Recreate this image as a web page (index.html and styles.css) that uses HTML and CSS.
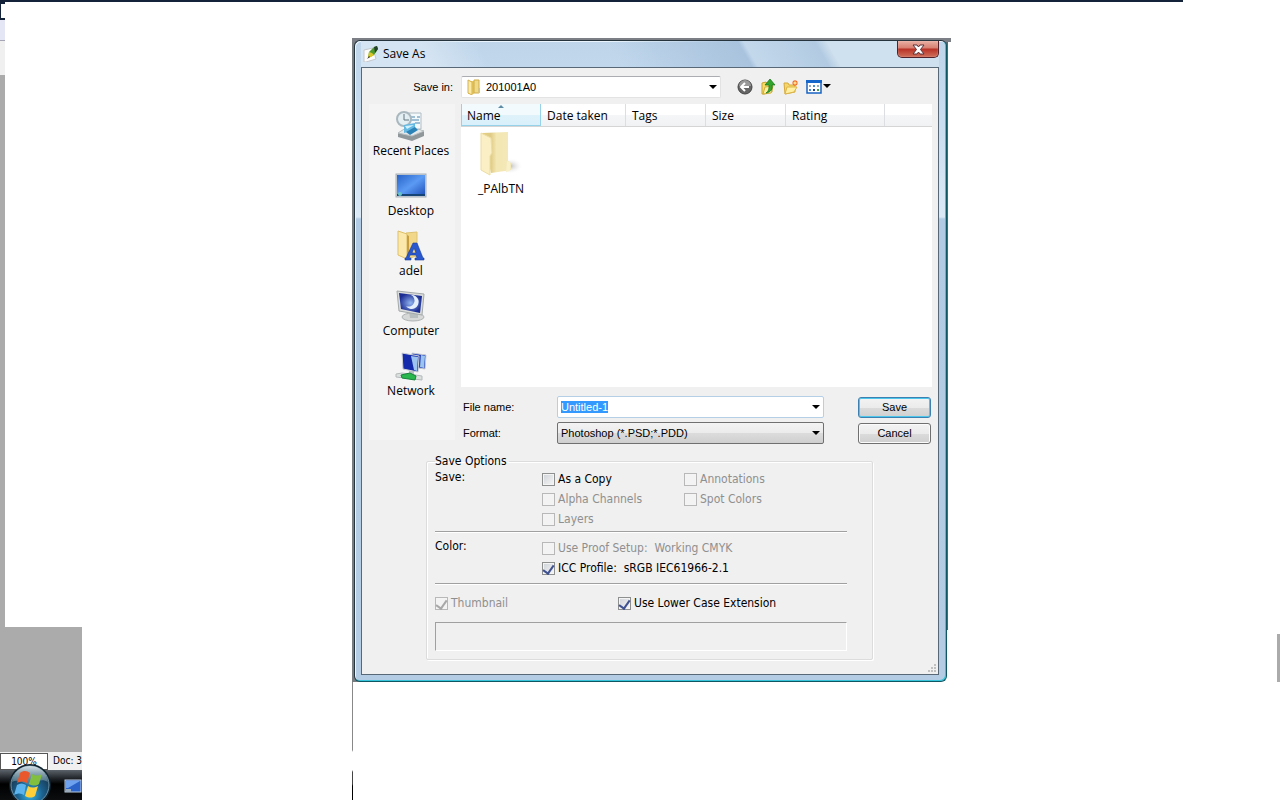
FILE: index.html
```
<!DOCTYPE html>
<html lang="en">
<head>
    <meta charset="UTF-8">
    <meta name="viewport" content="width=device-width, initial-scale=1.0">
    <title>Save As</title>
    <link rel="stylesheet" href="styles.css">
</head>
<body>

    <div class="desktop">
        <!-- pieces of the editor window behind the dialog -->
        <div class="top-strip"></div>
        <div class="left-strip">
            <div class="strip-tab"></div>
            <div class="strip-bar"></div>
            <div class="strip-light"></div>
            <div class="strip-canvas"></div>
        </div>
        <div class="right-strip"></div>
        <div class="divider"></div>

        <div class="editor-corner">
            <div class="canvas"></div>
            <div class="status">
                <input class="zoom-box" type="text" value="100%" aria-label="Zoom">
                <span class="doc">Doc: 3</span>
            </div>
            <div class="taskbar">
                <button class="start" aria-label="Start">
                    <svg width="44" height="44" viewBox="0 0 44 44">
                        <defs>
                            <radialGradient id="orb" cx="50%" cy="75%" r="65%">
                                <stop offset="0" stop-color="#35b8e8"/>
                                <stop offset="0.5" stop-color="#1c618f"/>
                                <stop offset="1" stop-color="#173449"/>
                            </radialGradient>
                            <linearGradient id="shine" x1="0" y1="0" x2="0" y2="1">
                                <stop offset="0" stop-color="#d6e2e8"/>
                                <stop offset="1" stop-color="#5f8799" stop-opacity="0.5"/>
                            </linearGradient>
                        </defs>
                        <circle cx="22" cy="22" r="21" fill="#10212c"/>
                        <circle cx="22" cy="22" r="19" fill="url(#orb)" stroke="#6d93a6"/>
                        <path d="M4 19C5 9 13 3 22 3s17 6 18 16c-9-5-13 3-18 3S11 15 4 19z" fill="url(#shine)"/>
                        <path d="M12 10c4-3 7-2 10 0l-3 10c-3-2-6-2-10 0z" fill="#e8582c"/>
                        <path d="M24 11c3 2 6 2 10 0l-3 10c-3 2-6 2-10 0z" fill="#83bf3f"/>
                        <path d="M9 22c3-2 6-2 9 0l-2 10c-3-2-6-2-10 0z" fill="#5bb4ee"/>
                        <path d="M20 23c3 2 6 2 10 0l-3 10c-3 2-6 2-10 0z" fill="#ffcf3a"/>
                    </svg>
                </button>
                <svg class="quick" width="18" height="16" viewBox="0 0 18 16">
                    <rect x="1" y="2" width="16" height="12" fill="#2c63c8" stroke="#b9cbe0"/>
                    <path d="M2 3h14l-12 7H2z" fill="#6fa2ee"/>
                    <rect x="2" y="11" width="5" height="3" fill="#9ab"/>
                </svg>
            </div>
        </div>

        <div class="backdrop-top"></div>
        <div class="backdrop-left"></div>
        <div class="backdrop"></div>

        <div class="dialog" role="dialog" aria-labelledby="dialog-title">
            <div class="titlebar">
                <svg width="16" height="16" viewBox="0 0 16 16">
                    <path d="M1 4l9-2 3 11-10 3H1z" fill="#fbfbfb" stroke="#c3c8cc"/>
                    <path d="M5 12L6 6l5-5 3-1 1 3-4 6z" fill="#4f9a2d"/>
                    <path d="M11 1l3-1 1 3-3 4z" fill="#23402a"/>
                    <path d="M6 6l3 1 2 2-3 2-3 1z" fill="#d9c529"/>
                    <path d="M4 13l2-3 1 1z" fill="#333"/>
                </svg>
                <span class="title" id="dialog-title">Save As</span>
                <button class="close" aria-label="Close">
                    <svg width="13" height="11" viewBox="0 0 13 11">
                        <path d="M1 1h4l1.500 2L8 1h4L8.500 5.500 12 10H8L6.500 8 5 10H1l3.500-4.500z" fill="#fff" stroke="#59333a"/>
                    </svg>
                </button>
            </div>

            <div class="client">
                <div class="location">
                    <label class="shell" for="save-in">Save in:</label>
                    <div class="combo folder-combo">
                        <svg class="combo-icon" width="16" height="16" viewBox="0 0 16 16">
                            <path d="M2 2h6v13H2z" fill="#e8c860"/>
                            <path d="M8 1h5v13H8z" fill="#f0d987" stroke="#d0ab48"/>
                            <path d="M2 1l4 2v13l-4-2z" fill="#fbe9a8" stroke="#d6b14e"/>
                            <path d="M12 9h2v5h-2z" fill="#d9c37a"/>
                        </svg>
                        <select id="save-in" class="shell">
                            <option>201001A0</option>
                        </select>
                    </div>
                    <div class="tools">
                        <button aria-label="Back">
                            <svg width="16" height="16" viewBox="0 0 16 16">
                                <circle cx="8" cy="8" r="7" fill="#666" stroke="#444"/>
                                <path d="M2 7a6 6 0 0 1 12 0z" fill="#999"/>
                                <path d="M12 8H5M8 4L4 8l4 4" fill="none" stroke="#fff" stroke-width="2"/>
                            </svg>
                        </button>
                        <button aria-label="Up one level">
                            <svg width="16" height="16" viewBox="0 0 16 16">
                                <path d="M2 4l4-1 1 2 5-1v9l-8 2H2z" fill="#f6dc69" stroke="#caa12c"/>
                                <path d="M3 15l2-7 8-1-2 7z" fill="#fff1a0" stroke="#d3ad3c"/>
                                <path d="M6 14c3-2 3-5 3-8H5l5-6 5 6h-3c1 4-1 7-6 8z" fill="#31a52c" stroke="#167018" stroke-width=".7"/>
                            </svg>
                        </button>
                        <button aria-label="New folder">
                            <svg width="16" height="16" viewBox="0 0 16 16">
                                <path d="M1 4h4l1 2h6v7L2 15z" fill="#f5d66c" stroke="#d6a93a"/>
                                <path d="M2 15l2-7h10l-3 5z" fill="#fff0a3" stroke="#dcb54a"/>
                                <path d="M12 1v6M9 4h6M10 2l4 4M14 2l-4 4" stroke="#f26a21" stroke-width="1.200"/>
                                <circle cx="12" cy="4" r="1.500" fill="#ffd98a"/>
                            </svg>
                        </button>
                        <button aria-label="View menu">
                            <svg width="25" height="16" viewBox="0 0 25 16">
                                <rect x="1" y="2" width="14" height="12" fill="#fff" stroke="#1763c0" stroke-width="1.500"/>
                                <path d="M0 1h16v3H0z" fill="#1667cc"/>
                                <path d="M3 6h2v2H3zM11 6h2v2h-2z" fill="#9ab"/>
                                <path d="M7 6h2v2H7zM3 10h2v2H3z" fill="#4b8fd0"/>
                                <path d="M7 10h2v2H7z" fill="#223f9a"/>
                                <path d="M11 10h2v2h-2z" fill="#4aa04a"/>
                                <path d="M17 5h8l-4 4z" fill="#000"/>
                            </svg>
                        </button>
                    </div>
                </div>

                <div class="browser">
                    <nav class="places">
                        <button class="place">
                            <svg width="32" height="32" viewBox="0 0 32 32">
                                <path d="M3 23l11-7 15 5v5l-12 5L3 27z" fill="#90979b"/>
                                <path d="M3 23l11-7 15 5-12 5z" fill="#e5e9e9" stroke="#b8bfc2"/>
                                <path d="M13 3h13v16H13z" fill="#f3f8fb" stroke="#b0bdc4"/>
                                <path d="M16 7h4M22 7h3M16 10h8M20 13h5" stroke="#4c86ad"/>
                                <circle cx="9" cy="9" r="7" fill="#e2eef3" fill-opacity=".9" stroke="#a9b7be" stroke-width="2"/>
                                <path d="M9 4v6h5" fill="none" stroke="#637681"/>
                                <path d="M9 15l11-2v7l-11 3z" fill="#64b9e3"/>
                                <path d="M11 22l9-5 3 3-8 5z" fill="#2b83b8"/>
                                <path d="M10 16l9-1-7 4z" fill="#d2f1fd"/>
                            </svg>
                            <span>Recent Places</span>
                        </button>
                        <button class="place">
                            <svg width="32" height="32" viewBox="0 0 32 32">
                                <defs>
                                    <linearGradient id="screen" x1="0" y1="0" x2="1" y2="1">
                                        <stop offset="0" stop-color="#2864c8"/>
                                        <stop offset="0.5" stop-color="#5b9af4"/>
                                        <stop offset="1" stop-color="#1e4db8"/>
                                    </linearGradient>
                                </defs>
                                <rect x="1" y="4" width="30" height="23" fill="#cbd2da" stroke="#a7afb8"/>
                                <rect x="2" y="5" width="28" height="21" fill="url(#screen)"/>
                                <path d="M2 24h28v2H2z" fill="#174477"/>
                                <circle cx="5" cy="24" r="2" fill="#66c2c4"/>
                            </svg>
                            <span>Desktop</span>
                        </button>
                        <button class="place">
                            <svg width="32" height="32" viewBox="0 0 32 32">
                                <path d="M11 3l11-1v24l-11 3z" fill="#f1d789" stroke="#dec271"/>
                                <path d="M3 1l9 3v25l-9-4z" fill="#fbe8ad" stroke="#dfbf67"/>
                                <path d="M12 5v25l2-2V6z" fill="#c99e3f"/>
                                <path d="M18 13h4l6 15h1v2h-9v-2h2l-1-3h-6l-1 3h2v2h-6v-2h1zM19 18l-2 5h4z" fill="#2857cf" stroke="#173c9a" stroke-width=".6" fill-rule="evenodd"/>
                            </svg>
                            <span>adel</span>
                        </button>
                        <button class="place">
                            <svg width="32" height="32" viewBox="0 0 32 32">
                                <defs>
                                    <radialGradient id="night">
                                        <stop offset="0" stop-color="#91b4f0"/>
                                        <stop offset="1" stop-color="#1b2c93"/>
                                    </radialGradient>
                                </defs>
                                <ellipse cx="18" cy="27" rx="11" ry="4" fill="#d6d9d8" stroke="#aeb3b4"/>
                                <path d="M14 21l9 2v5h-8z" fill="#b8bdbd"/>
                                <path d="M2 1l27 3-2 21L4 21z" fill="#d9dcda" stroke="#a3a9aa"/>
                                <path d="M4 3l23 3-2 17L6 19z" fill="url(#night)"/>
                                <path d="M16 5a7 7 0 1 1-5 11 6 6 0 0 0 5-11z" fill="#e4effc"/>
                            </svg>
                            <span>Computer</span>
                        </button>
                        <button class="place">
                            <svg width="32" height="32" viewBox="0 0 32 32">
                                <path d="M17 3l14 2-1 14-13-2z" fill="#2943bd" stroke="#c6cbd0"/>
                                <path d="M26 5l4 1-1 12-4-1z" fill="#9bc5ed"/>
                                <path d="M7 3l17 3-1 16-15-3z" fill="#142cac" stroke="#cbd0d4"/>
                                <path d="M16 6l7 1-1 14-3-1z" fill="#9dc4ee"/>
                                <path d="M14 21h5v4h-5z" fill="#b7bfc2"/>
                                <path d="M1 24l6-1 20 3v4L1 27z" fill="#dce0df" stroke="#b4b9ba"/>
                                <path d="M6 25l9-2 6 3-1 4-13-2z" fill="#29b64c" stroke="#16853a"/>
                            </svg>
                            <span>Network</span>
                        </button>
                    </nav>

                    <div class="main">
                        <div class="files">
                            <div class="columns">
                                <button class="column sorted">Name</button>
                                <button class="column date">Date taken</button>
                                <button class="column">Tags</button>
                                <button class="column">Size</button>
                                <button class="column rating">Rating</button>
                                <div class="column-rest"></div>
                            </div>
                            <button class="file">
                                <svg width="48" height="48" viewBox="0 0 48 48">
                                    <defs>
                                        <linearGradient id="fold" x1="0" y1="0" x2="1" y2="0">
                                            <stop offset="0" stop-color="#e4cf83"/>
                                            <stop offset="0.3" stop-color="#dfcb85"/>
                                            <stop offset="0.5" stop-color="#f3e7b3"/>
                                            <stop offset="1" stop-color="#f3e8b8"/>
                                        </linearGradient>
                                        <radialGradient id="shade">
                                            <stop offset="0" stop-color="#bbb"/>
                                            <stop offset="1" stop-color="#fff" stop-opacity="0"/>
                                        </radialGradient>
                                    </defs>
                                    <ellipse cx="33" cy="36" rx="13" ry="8" fill="url(#shade)"/>
                                    <path d="M5 3l26-1v29l3 2v7l-20 3z" fill="url(#fold)"/>
                                    <path d="M30 31l3 1v9l-4 1z" fill="#f8f0c9"/>
                                    <path d="M4 3l10 5 1 15-2 3v19L4 40z" fill="#faefc5" stroke="#eedda0"/>
                                </svg>
                                <span>_PAlbTN</span>
                            </button>
                        </div>

                        <div class="form shell">
                            <label for="file-name">File name:</label>
                            <div class="combo name-combo">
                                <input type="text" id="file-name" value="Untitled-1">
                            </div>
                            <button class="push default">Save</button>
                            <label for="format">Format:</label>
                            <div class="combo format-combo">
                                <select id="format">
                                    <option>Photoshop (*.PSD;*.PDD)</option>
                                </select>
                            </div>
                            <button class="push">Cancel</button>
                        </div>
                    </div>
                </div>

                <fieldset class="options">
                    <legend>Save Options</legend>
                    <div class="group">
                        <span class="group-name">Save:</span>
                        <div class="checks">
                            <label class="check"><input type="checkbox">As a Copy</label>
                            <label class="check off"><input type="checkbox" disabled>Annotations</label>
                            <label class="check off"><input type="checkbox" disabled>Alpha Channels</label>
                            <label class="check off"><input type="checkbox" disabled>Spot Colors</label>
                            <label class="check off"><input type="checkbox" disabled>Layers</label>
                        </div>
                    </div>
                    <div class="group color">
                        <span class="group-name">Color:</span>
                        <div>
                            <label class="check off"><input type="checkbox" disabled>Use Proof Setup:&nbsp; Working CMYK</label>
                            <label class="check"><input type="checkbox" checked>ICC Profile:&nbsp; sRGB IEC61966-2.1</label>
                        </div>
                    </div>
                    <div class="extras">
                        <label class="check off"><input type="checkbox" checked disabled>Thumbnail</label>
                        <label class="check"><input type="checkbox" checked>Use Lower Case Extension</label>
                    </div>
                    <div class="message"></div>
                </fieldset>

                <svg class="grip" width="10" height="10" viewBox="0 0 10 10">
                    <path d="M7 0h2v2H7zM4 3h2v2H4zM7 3h2v2H7zM1 6h2v2H1zM4 6h2v2H4zM7 6h2v2H7z" fill="#c0c0c0"/>
                </svg>
            </div>
        </div>
    </div>

    <script>
        // the proposed name starts selected so that typing replaces it
        const fileName = document.getElementById('file-name');
        fileName.focus();
        fileName.select();
    </script>

</body>
</html>
```
FILE: styles.css
```
* {
    box-sizing: border-box;
}
body {
    margin: 0;
    background-color: #fff;
    font-family: 'Open Sans', sans-serif;
    font-size: 12px;
    line-height: 16px;
    color: #000;
}
button, input, select {
    font: inherit;
    color: inherit;
    margin: 0;
}
button {
    padding: 0;
    border: none;
    background: none;
}
svg {
    display: block;
    flex: none;
}
.shell {
    font-family: 'Liberation Sans', Arial, sans-serif;
    font-size: 11px;
}
.desktop {
    position: relative;
    min-height: 100vh;
    overflow: hidden;
}

/* editor window */
.top-strip {
    width: 1183px;
    height: 2px;
    background-color: #14233a;
}
.left-strip {
    position: absolute;
    top: 0;
    left: 0;
    width: 5px;
}
.strip-tab {
    height: 20px;
    border: solid #14233a;
    border-width: 4px 0 2px 1px;
}
.strip-bar {
    height: 21px;
    background-color: #e4e5f5;
    border-bottom: 1px solid #a5a5b5;
}
.strip-light {
    height: 34px;
    background-color: #f0f0f0;
}
.strip-canvas {
    height: 552px;
    background-color: #ababab;
}
.right-strip {
    position: absolute;
    top: 634px;
    right: 0;
    width: 3px;
    height: 48px;
    background-color: #ababab;
}
.divider {
    position: absolute;
    top: 682px;
    left: 352px;
    width: 1px;
    height: 118px;
    background: linear-gradient(#888 68px, #fff 70px, #fff 88px, #444 90px, #444 102px, #000 104px);
}
.editor-corner {
    position: absolute;
    left: 0;
    bottom: 0;
    width: 82px;
    overflow: hidden;
}
.canvas {
    height: 125px;
    background-color: #ababab;
}
.status {
    display: flex;
    align-items: center;
    height: 18px;
    background-color: #f0f0f0;
    font-family: 'DejaVu Sans Condensed', 'DejaVu Sans', sans-serif;
    font-size: 10px;
    white-space: nowrap;
}
.zoom-box {
    width: 48px;
    height: 17px;
    padding: 0;
    border: 1px solid #555;
    background-color: #fff;
    text-align: center;
}
.doc {
    padding-left: 5px;
}
.taskbar {
    display: flex;
    height: 30px;
    background: linear-gradient(#5b6269, #23282d 8px, #000 14px, #0b0d0f);
}
.start {
    position: relative;
    top: -7px;
    margin-left: 8px;
}
.quick {
    margin: 8px 0 0 12px;
}

/* dialog frame */
.backdrop-top {
    position: absolute;
    top: 38px;
    left: 352px;
    width: 599px;
    height: 4px;
    background-color: #7c7f86;
}
.backdrop-left {
    position: absolute;
    top: 42px;
    left: 352px;
    width: 10px;
    height: 640px;
    background-color: #777c80;
}
.backdrop {
    position: absolute;
    top: 42px;
    left: 362px;
    width: 586px;
    height: 588px;
    background-color: #59646d;
}
.dialog {
    position: absolute;
    top: 40px;
    left: 354px;
    width: 593px;
    padding: 0 7px 6px 6px;
    border: 1px solid #26343e;
    border-right-color: #0f5763;
    border-bottom-color: #0f5763;
    border-radius: 6px;
    background: linear-gradient(#bed5ea 0, #c5dbef 60px, #dbe9f6 176px, #b0cbe3 178px, #b4cde5);
    box-shadow: inset -1px -1px #36c5da, inset 1px 1px #e9f4fc;
}
.titlebar {
    display: flex;
    align-items: center;
    height: 26px;
    padding-left: 2px;
    background: linear-gradient(60deg, #d5e4f2 12%, transparent 22%, transparent 44%, #a9c3de 66%, #c3d8eb 67%, #b2cbe2 79%, #cfe0ee 81%, #cfe0ee);
}
.title {
    padding: 0 8px 0 4px;
}
.close {
    display: flex;
    align-items: center;
    justify-content: center;
    align-self: flex-start;
    width: 42px;
    height: 17px;
    margin-left: auto;
    border: 1px solid #51222a;
    border-top: none;
    border-radius: 0 0 5px 5px;
    background: linear-gradient(#e9b0a3, #d77f70 7px, #b83226 8px, #d0705c);
    box-shadow: inset 0 0 1px #ffe2da;
}
.client {
    position: relative;
    height: 608px;
    padding: 8px 6px 0 7px;
    border: 1px solid #596877;
    background-color: #f0f0f0;
}

/* location row */
.location {
    display: flex;
    align-items: center;
    height: 22px;
    margin-bottom: 6px;
}
.location label {
    width: 92px;
    padding-right: 8px;
    text-align: right;
}
.combo {
    position: relative;
}
.combo::after {
    content: "";
    position: absolute;
    top: 9px;
    right: 4px;
    border: solid transparent;
    border-width: 4px 4px 0;
    border-top-color: #000;
    pointer-events: none;
}
.combo select, .combo input {
    display: block;
    width: 100%;
    height: 22px;
    padding: 0 20px 0 3px;
    border: 1px solid #b5cfe7;
    border-radius: 2px;
    outline: none;
    background-color: #fff;
    appearance: none;
}
.folder-combo {
    width: 260px;
}
.folder-combo select {
    padding-left: 24px;
    border-color: #e3e3e3;
    border-top-color: #abadb3;
}
.combo-icon {
    position: absolute;
    top: 3px;
    left: 5px;
}
.tools {
    display: flex;
    gap: 7px;
    padding-left: 16px;
}

/* places and files */
.browser {
    display: grid;
    grid-template-columns: 86px 1fr;
    gap: 6px;
}
.places {
    display: flex;
    flex-direction: column;
    gap: 6px;
    margin-bottom: 4px;
    padding-top: 6px;
    background-color: #f4f4f4;
}
.place {
    display: flex;
    flex-direction: column;
    align-items: center;
    gap: 1px;
    height: 54px;
    padding-right: 2px;
    white-space: nowrap;
}
.files {
    height: 283px;
    background-color: #fff;
}
.columns {
    display: flex;
    height: 23px;
    border-bottom: 1px solid #d5d5d5;
    background: linear-gradient(#fff 50%, #f5f6f8 50%, #f1f2f4);
}
.column {
    position: relative;
    width: 80px;
    padding: 2px 0 0 6px;
    border-right: 1px solid #dcdee1;
    text-align: left;
}
.column.date {
    width: 85px;
}
.column.rating {
    width: 99px;
}
.column-rest {
    flex: 1;
}
.column.sorted {
    border: solid #96d2ea;
    border-width: 0 1px 1px;
    padding-left: 5px;
    background: linear-gradient(#f3fafd 50%, #dff2fa 50%, #d9f0fa);
}
.column.sorted::after {
    content: "";
    position: absolute;
    top: 1px;
    left: 36px;
    border: solid transparent;
    border-width: 0 3px 3px;
    border-bottom-color: #5f8ba5;
}
.file {
    display: flex;
    flex-direction: column;
    align-items: center;
    gap: 3px;
    width: 80px;
    padding-top: 3px;
}

/* name and format */
.form {
    display: grid;
    grid-template-columns: 94px 267px 1fr;
    row-gap: 4px;
    align-items: center;
    padding: 9px 0 0 2px;
}
.push {
    justify-self: end;
    width: 73px;
    height: 21px;
    margin-right: 1px;
    border: 1px solid #707070;
    border-radius: 3px;
    background: linear-gradient(#f3f3f3, #ebebeb 50%, #dcdcdc 50%, #cfcfcf);
    box-shadow: inset 0 0 0 1px #fbfbfb;
}
.push.default {
    border-color: #3c7fb1;
    box-shadow: inset 0 0 0 1px #4cc6ea;
}
.name-combo input::selection {
    background-color: #3399ff;
    color: #fff;
}
.format-combo select {
    border-color: #707070;
    background: linear-gradient(#f3f3f3, #ebebeb 50%, #dcdcdc 50%, #cfcfcf);
}

/* save options */
.options {
    margin: 9px 59px 0 57px;
    padding: 0 25px 8px 8px;
    border: 1px solid #dcdcdc;
    border-radius: 2px;
    box-shadow: 1px 1px #fff, inset 1px 1px #fff;
    font-family: 'DejaVu Sans Condensed', 'DejaVu Sans', sans-serif;
}
.options legend {
    padding: 0 2px 0 0;
}
.group {
    display: grid;
    grid-template-columns: 107px 1fr;
    margin-bottom: 6px;
    padding-bottom: 2px;
    border-bottom: 1px solid #a0a0a0;
    box-shadow: 0 1px #fff;
}
.group.color {
    padding-bottom: 5px;
}
.checks {
    display: grid;
    grid-template-columns: 142px 1fr;
}
.check {
    display: flex;
    align-items: center;
    gap: 3px;
    height: 20px;
    white-space: nowrap;
}
.check.off {
    color: #8f8f8f;
}
.check input {
    display: grid;
    place-items: center;
    width: 13px;
    height: 13px;
    border: 1px solid #8e8f8f;
    background: linear-gradient(135deg, #cfd3d8, #f6f6f6);
    box-shadow: inset 0 0 0 1px #f4f4f4;
    appearance: none;
}
.check.off input {
    border-color: #b8b8b8;
    background: #f3f3f3;
}
.check input:checked::after {
    content: "";
    width: 5px;
    height: 9px;
    margin-bottom: 2px;
    border: solid #3f5191;
    border-width: 0 2px 2px 0;
    transform: rotate(35deg);
}
.check.off input:checked::after {
    border-color: #a8a8a8;
}
.extras {
    display: grid;
    grid-template-columns: 183px 1fr;
    padding: 3px 0 9px;
}
.message {
    height: 29px;
    border: 1px solid #fff;
    border-top-color: #a0a0a0;
    border-left-color: #a0a0a0;
}
.grip {
    position: absolute;
    right: 1px;
    bottom: 0;
}
```
